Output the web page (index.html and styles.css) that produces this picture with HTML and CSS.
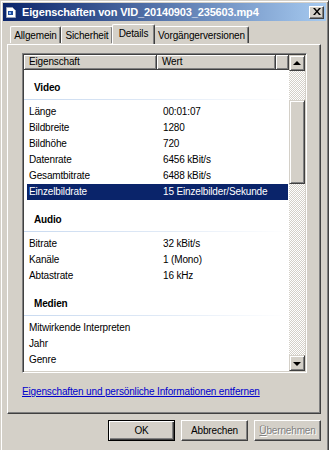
FILE: index.html
```html
<!DOCTYPE html>
<html lang="de">
<head>
<meta charset="utf-8">
<title>Eigenschaften</title>
<link rel="stylesheet" href="styles.css">
</head>
<body>
<div class="window">
  <div class="titlebar">
    <svg class="ticon" width="10" height="11" viewBox="0 0 10 11">
      <path d="M0.5 0.5h6l3 3v7h-9z" fill="#fff" stroke="#9aa4b8"/>
      <rect x="2" y="4" width="5" height="4" fill="#1f4d9c"/>
      <rect x="3" y="5" width="2" height="2" fill="#7fb0f0"/>
    </svg>
    <span class="title">Eigenschaften von VID_20140903_235603.mp4</span>
    <span class="close"><svg width="8" height="7" viewBox="0 0 8 7"><path d="M0 0h2l2 2.5 2-2.5h2l-3 3.5 3 3.5h-2l-2-2.5-2 2.5h-2l3-3.5z" fill="#000"/></svg></span>
  </div>
  <div class="tabs">
    <div class="tab t1">Allgemein</div>
    <div class="tab t2">Sicherheit</div>
    <div class="tab t3 active">Details</div>
    <div class="tab t4">Vorgängerversionen</div>
  </div>
  <div class="panel">
    <div class="list">
      <div class="listmain">
        <div class="header">
          <div class="hcell c1">Eigenschaft</div>
          <div class="hcell c2">Wert</div>
          <div class="hcell c3"></div>
        </div>
        <div class="rows">
          <div class="group first"><span>Video</span></div>
          <div class="row"><span>Länge</span><span>00:01:07</span></div>
          <div class="row"><span>Bildbreite</span><span>1280</span></div>
          <div class="row"><span>Bildhöhe</span><span>720</span></div>
          <div class="row"><span>Datenrate</span><span>6456 kBit/s</span></div>
          <div class="row"><span>Gesamtbitrate</span><span>6488 kBit/s</span></div>
          <div class="row selected"><span>Einzelbildrate</span><span>15 Einzelbilder/Sekunde</span></div>
          <div class="group"><span>Audio</span></div>
          <div class="row"><span>Bitrate</span><span>32 kBit/s</span></div>
          <div class="row"><span>Kanäle</span><span>1 (Mono)</span></div>
          <div class="row"><span>Abtastrate</span><span>16 kHz</span></div>
          <div class="group"><span>Medien</span></div>
          <div class="row"><span>Mitwirkende Interpreten</span><span></span></div>
          <div class="row"><span>Jahr</span><span></span></div>
          <div class="row"><span>Genre</span><span></span></div>
        </div>
      </div>
      <div class="scrollbar">
        <div class="sbtn"><span class="arrow up"></span></div>
        <div class="track">
          <div class="thumb"></div>
        </div>
        <div class="sbtn"><span class="arrow down"></span></div>
      </div>
    </div>
    <a class="link" href="#">Eigenschaften und persönliche Informationen entfernen</a>
  </div>
  <div class="buttons">
    <div class="btn default"><span>OK</span></div>
    <div class="btn">Abbrechen</div>
    <div class="btn disabled"><u>Ü</u>bernehmen</div>
  </div>
</div>
</body>
</html>
```

FILE: styles.css
```css
* { box-sizing: border-box; }
html, body { margin: 0; padding: 0; }
body {
  width: 329px;
  height: 450px;
  overflow: hidden;
  background: #d4d0c8;
  font-family: "Liberation Sans", Arial, sans-serif;
  font-size: 10px;
  letter-spacing: -0.15px;
  color: #000;
}
.window {
  width: 329px;
  height: 452px;
  border: 1px solid;
  border-color: #d4d0c8 #404040 #404040 #d4d0c8;
  box-shadow: inset 1px 1px 0 #fff, inset -1px -1px 0 #808080;
  padding: 2px;
  display: flex;
  flex-direction: column;
}
.titlebar {
  height: 18px;
  background: linear-gradient(to right, #0a246a, #a6caf0);
  display: flex;
  align-items: center;
  padding: 0 2px 0 3px;
  color: #fff;
  font-weight: bold;
  font-size: 11px;
  letter-spacing: -0.15px;
}
.ticon { margin-right: 6px; flex: none; }
.title { flex: 1; white-space: nowrap; }
.close {
  width: 15px;
  height: 13px;
  background: #d4d0c8;
  border: 1px solid;
  border-color: #fff #404040 #404040 #fff;
  box-shadow: inset -1px -1px 0 #808080;
  display: flex;
  align-items: center;
  justify-content: center;
  padding-bottom: 1px;
}
.tabs {
  display: flex;
  align-items: flex-end;
  height: 23px;
  padding-left: 7px;
  position: relative;
  z-index: 1;
}
.tab {
  height: 17px;
  padding: 3px 0 0;
  text-align: center;
  background: #d4d0c8;
  border-top: 1px solid #fff;
  border-left: 1px solid #fff;
  border-right: 1px solid #404040;
  box-shadow: inset -1px 0 0 #808080;
  border-radius: 2px 2px 0 0;
  margin-bottom: 1px;
}
.t1 { width: 51px; }
.t2 { width: 52px; }
.t3 { width: 43px; }
.t4 { width: 95px; }
.tab.active {
  height: 20px;
  margin: 0 -1px 0 -1px;
  padding-top: 3px;
  position: relative;
  z-index: 2;
}
.panel {
  margin: 0 5px 0 4px;
  height: 370px;
  border: 1px solid;
  border-color: #fff #404040 #404040 #fff;
  box-shadow: inset -1px -1px 0 #808080;
  padding: 8px 13px 0 14px;
  display: flex;
  flex-direction: column;
}
.list {
  height: 320px;
  border: 1px solid;
  border-color: #808080 #fff #fff #808080;
  box-shadow: inset 1px 1px 0 #404040, inset -1px -1px 0 #d4d0c8;
  padding: 1px;
  display: flex;
  background: #fff;
}
.listmain {
  flex: 1;
  display: flex;
  flex-direction: column;
  overflow: hidden;
}
.header { display: flex; height: 15px; flex: none; }
.hcell {
  background: #d4d0c8;
  border-right: 1px solid #404040;
  border-bottom: 1px solid #404040;
  box-shadow: inset 1px 1px 0 #fff, inset -1px -1px 0 #808080;
  padding: 1px 0 0 5px;
  line-height: 12px;
}
.c1 { width: 133px; }
.c2 { width: 119px; }
.c3 { flex: 1; }
.rows { flex: 1; overflow: hidden; }
.group {
  height: 36px;
  padding: 12px 0 0 10px;
  font-weight: bold;
  line-height: 16px;
  position: relative;
}
.group.first { height: 34px; padding-top: 10px; }
.group::after {
  content: "";
  position: absolute;
  left: 0;
  right: 0;
  bottom: 4px;
  height: 1px;
  background: linear-gradient(to right, #c9daf0 0%, #dfe9f6 50%, #fff 100%);
}
.row {
  display: grid;
  grid-template-columns: 134px 1fr;
  height: 16px;
  line-height: 16px;
  padding-left: 2px;
  margin: 0 1px 0 3px;
  white-space: nowrap;
}
.row.selected { background: #0a246a; color: #fff; }
.scrollbar {
  width: 16px;
  display: flex;
  flex-direction: column;
  flex: none;
}
.sbtn {
  height: 16px;
  background: #d4d0c8;
  border: 1px solid;
  border-color: #d4d0c8 #404040 #404040 #d4d0c8;
  box-shadow: inset 1px 1px 0 #fff, inset -1px -1px 0 #808080;
  display: flex;
  align-items: center;
  justify-content: center;
  flex: none;
}
.arrow { width: 0; height: 0; border-left: 4px solid transparent; border-right: 4px solid transparent; }
.arrow.up { border-bottom: 4px solid #000; margin-top: -1px; }
.arrow.down { border-top: 4px solid #000; margin-top: 1px; }
.track {
  flex: 1;
  background-color: #fff;
  background-image: repeating-conic-gradient(#d4d0c8 0 25%, #fff 0 50%);
  background-size: 2px 2px;
  padding-top: 29px;
}
.thumb {
  height: 84px;
  background: #d4d0c8;
  border: 1px solid;
  border-color: #d4d0c8 #404040 #404040 #d4d0c8;
  box-shadow: inset 1px 1px 0 #fff, inset -1px -1px 0 #808080;
}
.link {
  margin-top: 11px;
  color: #0000cc;
  text-decoration: underline;
  line-height: 16px;
  align-self: flex-start;
}
.buttons {
  display: flex;
  justify-content: flex-end;
  gap: 6px;
  padding: 6px 5px 0 0;
}
.btn {
  width: 67px;
  height: 21px;
  border: 1px solid;
  border-color: #fff #404040 #404040 #fff;
  box-shadow: inset -1px -1px 0 #808080;
  display: flex;
  align-items: center;
  justify-content: center;
  background: #d4d0c8;
}
.btn.default {
  border: 1px solid #000;
  box-shadow: inset 1px 1px 0 #fff, inset -1px -1px 0 #404040, inset -2px -2px 0 #808080;
}
.btn.disabled { color: #808080; text-shadow: 1px 1px 0 #fff; }
```
